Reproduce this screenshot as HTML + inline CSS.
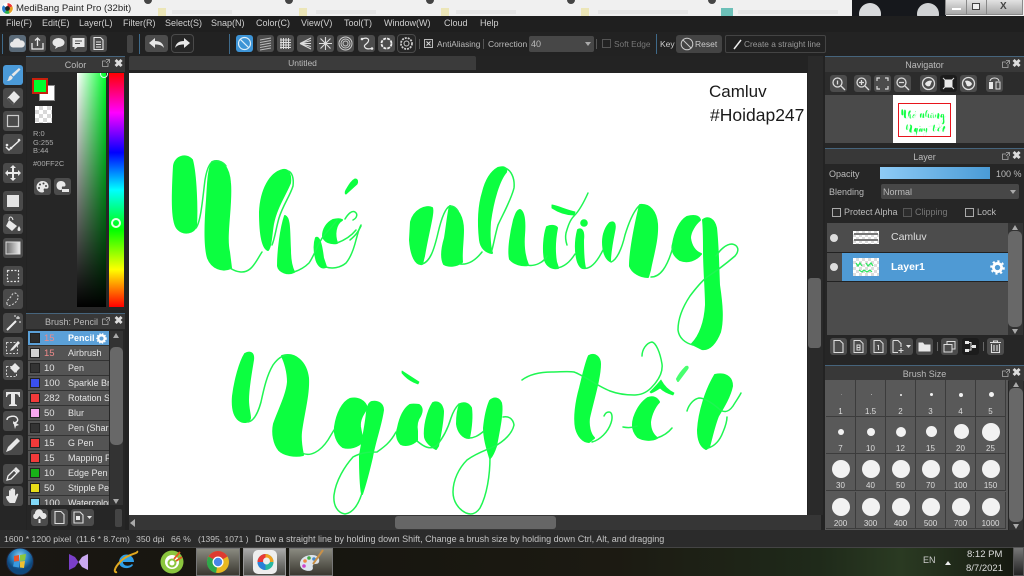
<!DOCTYPE html>
<html lang="en"><head><meta charset="utf-8"><title>MediBang Paint Pro</title>
<style>
html,body{margin:0;padding:0;background:#222}
#r{position:relative;width:1024px;height:576px;overflow:hidden;background:#232323;font-family:"Liberation Sans",sans-serif;color:#ccc;font-size:9px;filter:blur(.3px)}
#r div,#r span,#r svg{position:absolute;display:block;box-sizing:border-box}
#r span{white-space:nowrap}
svg.b,div.b{width:17px;height:17px;background:#4c4c4c;border-radius:3px;fill:#e8e8e8;stroke:none}
svg.t{left:3px;width:20px;height:20px;background:#4a4a4a;border-radius:3px;fill:#e8e8e8}
.hd{background:#383838;border-top:1px solid #46647c;height:16px;color:#bbb;text-align:center;line-height:16px;font-size:9px}
.m{top:18px;color:#d0d0d0;font-size:9px}
.row{left:28px;width:81px;height:15px;background:#545454;border-bottom:1px solid #333}
.row i{position:absolute;left:2px;top:2px;width:10px;height:10px;border:1px solid #222;box-sizing:border-box}
.row b{position:absolute;left:16px;top:2px;font:400 9.5px "Liberation Sans",sans-serif;color:#e0e0e0}
.row u{position:absolute;left:40px;top:2px;text-decoration:none;font-size:9px;color:#e4e4e4;width:41px;overflow:hidden;white-space:nowrap}
.c{width:30px;height:37px;background:#595959;border-right:1px solid #3c3c3c;border-bottom:1px solid #3c3c3c}
.c i{position:absolute;background:#f2f2f2;border-radius:50%}
.c u{position:absolute;left:0;width:100%;top:27px;text-align:center;text-decoration:none;font-size:8px;color:#ddd}
.ck{width:9px;height:9px;border:1px solid #aaa;background:#2c2c2c}
.dot{top:-4px;width:8px;height:8px;border-radius:50%;background:#444}
</style></head><body><div id="r">

<!-- title bar -->
<div style="left:0;top:0;width:1024px;height:16px;background:#f0f0f0"></div>
<div class="dot" style="left:144px"></div><div class="dot" style="left:285px"></div><div class="dot" style="left:426px"></div><div class="dot" style="left:567px"></div><div class="dot" style="left:708px"></div>
<div style="left:158px;top:8px;width:8px;height:8px;background:#ece6b8"></div>
<div style="left:172px;top:10px;width:60px;height:4px;background:#e6e6e6"></div>
<div style="left:299px;top:8px;width:8px;height:8px;background:#ece6b8"></div>
<div style="left:316px;top:10px;width:60px;height:4px;background:#e6e6e6"></div>
<div style="left:441px;top:8px;width:8px;height:8px;background:#ece6b8"></div>
<div style="left:456px;top:10px;width:60px;height:4px;background:#e6e6e6"></div>
<div style="left:581px;top:8px;width:8px;height:8px;background:#ece6b8"></div>
<div style="left:598px;top:10px;width:90px;height:4px;background:#e6e6e6"></div>
<div style="left:721px;top:8px;width:12px;height:8px;background:#6cc0b8"></div>
<div style="left:738px;top:10px;width:100px;height:4px;background:#e6e6e6"></div>
<div style="left:852px;top:0;width:94px;height:16px;background:#16181c"></div>
<div style="left:859px;top:3px;width:22px;height:22px;border-radius:50%;background:#d8dadc;clip-path:inset(0 0 9px 0)"></div>
<div style="left:917px;top:3px;width:22px;height:22px;border-radius:50%;background:#d0d2d4;clip-path:inset(0 0 9px 0)"></div>
<div style="left:945px;top:0;width:78px;height:15px;background:linear-gradient(#e2e2e2,#a8a8a8);border:1px solid #8a8a8a;border-top:0"></div>
<div style="left:966px;top:0;width:1px;height:15px;background:#888"></div>
<div style="left:986px;top:0;width:1px;height:15px;background:#888"></div>
<div style="left:952px;top:8px;width:9px;height:2px;background:#fff"></div>
<div style="left:972px;top:3px;width:8px;height:7px;border:1px solid #444;background:#eee"></div>
<span style="left:1000px;top:1px;font-size:10px;color:#444;font-weight:700">X</span>
<svg style="left:1px;top:2px;width:13px;height:13px" viewBox="0 0 12 12"><circle cx="6" cy="6" r="5.500" fill="#fff"/><path d="M6 6V1a5 5 0 0 1 4.500 3z" fill="#e33"/><path d="M6 6l4.500-2A5 5 0 0 1 8 10.500z" fill="#e8a020"/><path d="M6 6l2 4.500A5 5 0 0 1 3 10z" fill="#2ab04a"/><path d="M6 6L3 10A5 5 0 0 1 2 3z" fill="#2a80d0"/><circle cx="6" cy="6" r="2.200" fill="#222"/></svg>
<span style="left:16px;top:3px;font-size:9.600px;color:#222">MediBang Paint Pro (32bit)</span>

<!-- menu -->
<div style="left:0;top:16px;width:1024px;height:16px;background:#1f1f1f"></div>
<span class="m" style="left:6px">File(F)</span><span class="m" style="left:42px">Edit(E)</span><span class="m" style="left:79px">Layer(L)</span><span class="m" style="left:123px">Filter(R)</span><span class="m" style="left:165px">Select(S)</span><span class="m" style="left:211px">Snap(N)</span><span class="m" style="left:256px">Color(C)</span><span class="m" style="left:301px">View(V)</span><span class="m" style="left:344px">Tool(T)</span><span class="m" style="left:384px">Window(W)</span><span class="m" style="left:444px">Cloud</span><span class="m" style="left:480px">Help</span>

<!-- toolbar -->
<div style="left:0;top:32px;width:826px;height:24px;background:#222"></div>
<div style="left:2px;top:34px;width:1px;height:20px;background:#3f6a8a"></div>
<svg class="b" style="left:9px;top:35px;background:#5a6a78" viewBox="0 0 17 17"><path d="M4 12.500a3 3 0 0 1 0-6 4 4 0 0 1 7.500-1A3.500 3.500 0 0 1 13 12.500z"/></svg>
<svg class="b" style="left:29px;top:35px" viewBox="0 0 17 17"><path d="M3 8v6h11V8M8.500 11V3M6 5.500l2.500-2.500 2.500 2.500" fill="none" stroke="#e8e8e8" stroke-width="1.300"/></svg>
<svg class="b" style="left:50px;top:35px" viewBox="0 0 17 17"><ellipse cx="8.500" cy="7.500" rx="6" ry="4.500"/><path d="M6 11l-1 3 4-2.500z"/></svg>
<svg class="b" style="left:70px;top:35px" viewBox="0 0 17 17"><path d="M2.500 3h12v9h-7l-3 2.500V12h-2z"/><path d="M5 6h7M5 8.500h5" stroke="#4c4c4c" fill="none"/></svg>
<svg class="b" style="left:90px;top:35px" viewBox="0 0 17 17"><path d="M4 2.500h6.500L13 5v9.500H4zM6 7h5M6 9.500h5M6 12h5" fill="none" stroke="#e8e8e8" stroke-width="1.100"/></svg>
<div style="left:127px;top:35px;width:6px;height:18px;background:#444;border-radius:2px"></div>
<div style="left:139px;top:34px;width:1px;height:20px;background:#3f6a8a"></div>
<svg class="b" style="left:145px;top:35px;width:23px" viewBox="0 0 23 17"><path d="M4 8l6-5v3c5 0 8 2 9 7-2-3-5-3.500-9-3.500V13z"/></svg>
<svg class="b" style="left:172px;top:35px;width:21px;background:#262626;outline:1px solid #4a4a4a" viewBox="0 0 21 17"><path d="M18 8l-6-5v3c-5 0-8 2-9 7 2-3 5-3.500 9-3.500V13z"/></svg>
<div style="left:229px;top:34px;width:1px;height:20px;background:#3f6a8a"></div>
<svg class="b" style="left:236px;top:35px;background:#3d94d6" viewBox="0 0 17 17"><circle cx="8.500" cy="8.500" r="6" fill="none" stroke="#dceefa" stroke-width="1.200"/><path d="M4.300 4.300l8.400 8.400" stroke="#dceefa" stroke-width="1.200"/></svg>
<svg class="b" style="left:257px;top:35px" viewBox="0 0 17 17"><path d="M3 5l11-2M3 7.500l11-2M3 10l11-2M3 12.500l11-2M3 15l11-2" stroke="#bbb" fill="none"/></svg>
<svg class="b" style="left:277px;top:35px" viewBox="0 0 17 17"><path d="M4 3v11M6.500 3v11M9 3v11M11.500 3v11M3 5h11M3 7.500h11M3 10h11M3 12.500h11" stroke="#ddd" fill="none"/></svg>
<svg class="b" style="left:297px;top:35px" viewBox="0 0 17 17"><path d="M3 8.500L14 3M3 8.500h11M3 8.500L14 14M3 8.500L14 5.500M3 8.500L14 11.500" stroke="#ddd" fill="none"/></svg>
<svg class="b" style="left:317px;top:35px" viewBox="0 0 17 17"><path d="M8.500 2v13M2 8.500h13M3.500 3.500l10 10M13.500 3.500l-10 10" stroke="#ddd" fill="none" stroke-width="1.100"/></svg>
<svg class="b" style="left:337px;top:35px" viewBox="0 0 17 17" fill="none"><g fill="none" stroke="#ccc"><circle cx="8.500" cy="8.500" r="6.500"/><circle cx="8.500" cy="8.500" r="4.500"/><circle cx="8.500" cy="8.500" r="2.500"/></g></svg>
<svg class="b" style="left:358px;top:35px" viewBox="0 0 17 17"><path d="M4 4c5-2 8 0 6 3S5 10 7 12.500s5 1 7 1" fill="none" stroke="#e8e8e8" stroke-width="1.200"/><circle cx="4" cy="4" r="1.300"/><circle cx="14" cy="13.500" r="1.300"/></svg>
<svg class="b" style="left:378px;top:35px" viewBox="0 0 17 17"><circle cx="8.500" cy="8.500" r="5" fill="none" stroke="#eee" stroke-width="1.800" stroke-dasharray="3 1"/></svg>
<svg class="b" style="left:398px;top:35px;background:#262626;outline:1px solid #4a4a4a" viewBox="0 0 17 17"><circle cx="8.500" cy="8.500" r="5.500" fill="none" stroke="#ccc" stroke-width="1.800" stroke-dasharray="2 1"/><circle cx="8.500" cy="8.500" r="2.500" fill="none" stroke="#ccc"/></svg>
<div style="left:419px;top:39px;width:1px;height:10px;background:#555"></div>
<svg style="left:424px;top:39px;width:9px;height:9px" viewBox="0 0 9 9"><rect x=".5" y=".5" width="8" height="8" fill="#2a2a2a" stroke="#bbb"/><path d="M2.500 2.500l4 4M6.500 2.500l-4 4" stroke="#ddd"/></svg>
<span style="left:437px;top:39px;font-size:8.300px;color:#bbb">AntiAliasing</span>
<div style="left:483px;top:39px;width:1px;height:10px;background:#555"></div>
<span style="left:488px;top:39px;font-size:8.500px;color:#bbb">Correction</span>
<div style="left:529px;top:36px;width:65px;height:16px;background:#474747;border-radius:2px"></div>
<span style="left:531px;top:39px;font-size:9px;color:#bbb">40</span>
<div style="left:585px;top:42px;border:3px solid transparent;border-top:4px solid #aaa"></div>
<div style="left:596px;top:39px;width:1px;height:10px;background:#555"></div>
<div class="ck" style="left:602px;top:39px;border-color:#555;background:#222"></div>
<span style="left:614px;top:39px;font-size:8.300px;color:#777">Soft Edge</span>
<div style="left:656px;top:34px;width:1px;height:20px;background:#3f6a8a"></div>
<span style="left:660px;top:39px;font-size:8.500px;color:#ccc">Key</span>
<div style="left:676px;top:35px;width:46px;height:18px;background:#444;border-radius:3px"></div>
<svg style="left:680px;top:37px;width:14px;height:14px" viewBox="0 0 14 14"><circle cx="7" cy="7" r="5.800" fill="none" stroke="#ccc"/><path d="M3 3l8 8" stroke="#ccc"/></svg>
<span style="left:695px;top:39px;font-size:8.500px;color:#ccc">Reset</span>
<div style="left:725px;top:35px;width:101px;height:18px;border:1px solid #444;border-radius:2px"></div>
<svg style="left:732px;top:38px;width:12px;height:12px" viewBox="0 0 12 12"><path d="M2 11L9 2" stroke="#eee" stroke-width="1.500"/></svg>
<span style="left:744px;top:39px;font-size:8.300px;color:#999">Create a straight line</span>

<!-- left tools -->
<div style="left:0;top:56px;width:26px;height:474px;background:#262626"></div>
<svg class="t" style="top:65px;background:#4b9ad8" viewBox="0 0 20 20"><path d="M16 3l1.500 1.500-7 7-2-2zM8 10.500l1.800 1.800c-.5 2.500-3 3.700-6 3.700 1.500-1 1.500-2 1.800-3 .4-1.500 1.200-2.500 2.400-2.500z"/></svg>
<svg class="t" style="top:88px" viewBox="0 0 20 20"><path d="M11 3l6 6-7 7.500-6-6z"/><path d="M6 10l5 5-1 1.500-6-6z" fill="#4a4a4a"/></svg>
<svg class="t" style="top:111px" viewBox="0 0 20 20"><rect x="4.500" y="4.500" width="11" height="11" fill="none" stroke="#ccc" stroke-width="1.200"/></svg>
<svg class="t" style="top:134px" viewBox="0 0 20 20"><path d="M3 13l3 3 11-10" fill="none" stroke="#eee" stroke-width="1.500"/><circle cx="4" cy="11" r="1.300"/><circle cx="8" cy="14" r="1.300"/><circle cx="16" cy="6" r="1.300"/></svg>
<svg class="t" style="top:163px" viewBox="0 0 20 20"><path d="M10 2l3 3h-2v4h4V7l3 3-3 3v-2h-4v4h2l-3 3-3-3h2v-4H5v2l-3-3 3-3v2h4V5H7z"/></svg>
<svg class="t" style="top:191px" viewBox="0 0 20 20"><rect x="4" y="4" width="12" height="12" fill="#e4e4e4"/></svg>
<svg class="t" style="top:214px" viewBox="0 0 20 20"><path d="M6 6l8 6-5 5-6-5z"/><path d="M6 6c0-4 3-4 4 0" fill="none" stroke="#eee"/><path d="M16 12c2 3 2 5 0 5s-2-2 0-5z"/></svg>
<svg class="t" style="top:238px" viewBox="0 0 20 20"><defs><linearGradient id="g1"><stop offset="0" stop-color="#666"/><stop offset="1" stop-color="#eee"/></linearGradient></defs><rect x="3" y="4" width="14" height="12" fill="url(#g1)" stroke="#ddd"/></svg>
<svg class="t" style="top:266px" viewBox="0 0 20 20"><rect x="4.500" y="4.500" width="11" height="11" fill="none" stroke="#ddd" stroke-width="1.200" stroke-dasharray="2 1.500"/></svg>
<svg class="t" style="top:289px" viewBox="0 0 20 20"><path d="M4 15c-1-4 3-5 5-9s7-1 6 3-4 6-7 7-3 1-4-1z" fill="none" stroke="#ccc" stroke-width="1.100" stroke-dasharray="2 1.500"/></svg>
<svg class="t" style="top:313px" viewBox="0 0 20 20"><path d="M4 17L13 8" stroke="#eee" stroke-width="2"/><path d="M15 3v3M13 5h4M17 8v2M12 2v2" stroke="#eee"/></svg>
<svg class="t" style="top:337px" viewBox="0 0 20 20"><rect x="3.500" y="5.500" width="11" height="11" fill="none" stroke="#ccc" stroke-dasharray="2 1.500"/><path d="M8 12l7-8 2 2-7 7-3 1z"/></svg>
<svg class="t" style="top:360px" viewBox="0 0 20 20"><rect x="3.500" y="6.500" width="10" height="10" fill="none" stroke="#ccc" stroke-dasharray="2 1.500"/><path d="M12 3l5 5-5 5-5-5z"/></svg>
<svg class="t" style="top:389px" viewBox="0 0 20 20"><path d="M3 3h14v5h-1c-.5-2-1-3-4-3v10l2 1v1H6v-1l2-1V5C5 5 4.500 6 4 8H3z"/></svg>
<svg class="t" style="top:411px" viewBox="0 0 20 20"><path d="M4 9c0-4 8-5 10-2s-1 5-4 5" fill="none" stroke="#eee" stroke-width="1.400"/><path d="M10 10l6 4-3 1-1 3z"/></svg>
<svg class="t" style="top:435px" viewBox="0 0 20 20"><path d="M3 17l2-5L14 3l3 3-9 9z"/></svg>
<svg class="t" style="top:464px" viewBox="0 0 20 20"><path d="M4 16l1-4 6-6 3 3-6 6z" fill="none" stroke="#eee" stroke-width="1.300"/><path d="M11 5l2-2 4 4-2 2z"/></svg>
<svg class="t" style="top:486px" viewBox="0 0 20 20"><path d="M6 10V5c0-1 1.500-1 1.500 0V3.500c0-1 1.500-1 1.500 0V3c0-1 1.600-1 1.600 0v1c0-1 1.500-1 1.500 0v6l1.500-2c1-1 2 0 1.500 1L12 17H7c-2-1-4-5-4-6s2-1 3-1z"/></svg>

<!-- color panel -->
<div style="left:27px;top:56px;width:98px;height:254px;background:#262626"></div>
<div class="hd" style="left:26px;top:56px;width:99px">Color</div>
<svg style="left:102px;top:59px;width:8px;height:8px" viewBox="0 0 8 8"><path d="M6 4v3.500H.5V2H4M4 .5h3.500V4M7.500.5L4 4" fill="none" stroke="#aaa" stroke-width=".8"/></svg>
<span style="left:114px;top:57px;font-size:11px;font-weight:700;color:#ddd">✖</span>
<div style="left:39px;top:85px;width:16px;height:16px;background:#fff;border:1px solid #888"></div>
<div style="left:32px;top:78px;width:16px;height:16px;background:#00ff2c;border:2px solid #c8200c"></div>
<div style="left:35px;top:106px;width:17px;height:17px;background:repeating-conic-gradient(#d8d8d8 0 25%,#fff 0 50%) 0 0/8px 8px"></div>
<span style="left:33px;top:129px;font-size:7.500px;color:#aaa">R:0</span>
<span style="left:33px;top:138px;font-size:7.500px;color:#aaa">G:255</span>
<span style="left:33px;top:146px;font-size:7.500px;color:#aaa">B:44</span>
<span style="left:33px;top:159px;font-size:7.500px;color:#aaa">#00FF2C</span>
<svg class="b" style="left:34px;top:178px" viewBox="0 0 17 17"><path d="M8.500 3c4 0 6 2.500 6 5.500s-3 2-4 2-1 1.500-.5 2.500-1 1.500-2 1.500c-3 0-5.500-2.500-5.500-5.500S5 3 8.500 3z"/><g fill="#444"><circle cx="6" cy="6.500" r="1"/><circle cx="9.500" cy="5.500" r="1"/><circle cx="12" cy="8" r="1"/><circle cx="5" cy="10" r="1"/></g></svg>
<svg class="b" style="left:54px;top:178px" viewBox="0 0 17 17"><path d="M7 3c3 0 4.500 2 4.500 4s-2 1.500-3 1.500S8 10 8 11s-1 1-1.500 1C4 12 2.500 10 2.500 7.500S4 3 7 3z"/><rect x="8" y="11" width="7" height="3"/></svg>
<div style="left:77px;top:73px;width:29px;height:234px;background:linear-gradient(to top,#000,transparent),linear-gradient(to right,#fff,#00ff2c)"></div>
<div style="left:100px;top:70px;width:8px;height:8px;border:1.500px solid #dfe;border-radius:50%;clip-path:inset(3px 0 0 0)"></div>
<div style="left:109px;top:73px;width:15px;height:234px;background:linear-gradient(#f00 0%,#f0f 17%,#00f 34%,#0ff 50%,#0f0 67%,#ff0 84%,#f00 100%)"></div>
<div style="left:111px;top:218px;width:10px;height:10px;border:2px solid #e8ffe8;border-radius:50%"></div>

<!-- brush panel -->
<div style="left:27px;top:313px;width:98px;height:217px;background:#262626"></div>
<div class="hd" style="left:26px;top:313px;width:99px;padding-right:8px">Brush: Pencil</div>
<svg style="left:102px;top:317px;width:8px;height:8px" viewBox="0 0 8 8"><path d="M6 4v3.500H.5V2H4M4 .5h3.500V4M7.500.5L4 4" fill="none" stroke="#aaa" stroke-width=".8"/></svg>
<span style="left:114px;top:314px;font-size:11px;font-weight:700;color:#ddd">✖</span>
<div style="left:28px;top:331px;width:81px;height:174px;overflow:hidden;background:#545454">
<div class="row" style="left:0;top:0;background:#5ba0d8"><i style="background:#2c2c2c"></i><b style="color:#ee8a8a">15</b><u style="font-weight:700;color:#fff">Pencil</u></div>
<div class="row" style="left:0;top:15px"><i style="background:#d4d4d4"></i><b style="color:#ee8a8a">15</b><u>Airbrush</u></div>
<div class="row" style="left:0;top:30px"><i style="background:#333"></i><b>10</b><u>Pen</u></div>
<div class="row" style="left:0;top:45px"><i style="background:#3a50ee"></i><b>100</b><u>Sparkle Brush</u></div>
<div class="row" style="left:0;top:60px"><i style="background:#f23a3a"></i><b>282</b><u>Rotation Sym</u></div>
<div class="row" style="left:0;top:75px"><i style="background:#f8a8f0"></i><b>50</b><u>Blur</u></div>
<div class="row" style="left:0;top:90px"><i style="background:#333"></i><b>10</b><u>Pen (Sharp)</u></div>
<div class="row" style="left:0;top:105px"><i style="background:#f23a3a"></i><b>15</b><u>G Pen</u></div>
<div class="row" style="left:0;top:120px"><i style="background:#f23a3a"></i><b>15</b><u>Mapping Pen</u></div>
<div class="row" style="left:0;top:135px"><i style="background:#18b018"></i><b>10</b><u>Edge Pen</u></div>
<div class="row" style="left:0;top:150px"><i style="background:#e8dc18"></i><b>50</b><u>Stipple Pen</u></div>
<div class="row" style="left:0;top:165px"><i style="background:#80d8f8"></i><b>100</b><u>Watercolor</u></div>
</div>
<svg style="left:96px;top:333px;width:11px;height:11px" viewBox="0 0 12 12"><circle cx="6" cy="6" r="3.500" fill="none" stroke="#fff" stroke-width="2.500"/><circle cx="6" cy="6" r="5" fill="none" stroke="#fff" stroke-width="1.500" stroke-dasharray="1.500 1.500"/></svg>
<div style="left:110px;top:331px;width:13px;height:174px;background:#333"></div>
<div style="left:110px;top:347px;width:13px;height:98px;background:#686868;border-radius:5px"></div>
<div style="left:113px;top:333px;border:3.500px solid transparent;border-bottom:5px solid #aaa;border-top:0"></div>
<div style="left:113px;top:499px;border:3.500px solid transparent;border-top:5px solid #aaa;border-bottom:0"></div>
<svg class="b" style="left:31px;top:509px" viewBox="0 0 17 17"><path d="M4 10a3 3 0 0 1 0-5.500 4 4 0 0 1 8-.5 3 3 0 0 1 1 6h-2l-2.500-3L6 10zM7.500 10h2v4h-2z"/></svg>
<svg class="b" style="left:51px;top:509px" viewBox="0 0 17 17"><path d="M4 2.500h6L13 5.500v9H4z" fill="none" stroke="#ddd" stroke-width="1.100"/></svg>
<svg class="b" style="left:71px;top:509px;width:23px" viewBox="0 0 23 17"><path d="M3 3h6l3 3v8H3z" fill="none" stroke="#ddd" stroke-width="1.100"/><rect x="5" y="7" width="4" height="4"/><path d="M16 7h5l-2.500 3z"/></svg>
<div style="left:115px;top:509px;width:7px;height:18px;background:#444;border-radius:2px"></div>

<!-- center -->
<div style="left:129px;top:56px;width:347px;height:14px;background:#3b3b3b;border-radius:2px 2px 0 0;text-align:center;color:#bbb;line-height:14px;font-size:8.500px">Untitled</div>
<div style="left:129px;top:73px;width:678px;height:442px;background:#fff;overflow:hidden"></div>
<span style="left:709px;top:82px;font-size:17px;color:#1a1a1a">Camluv</span>
<span style="left:710px;top:105px;font-size:17.500px;color:#1a1a1a">#Hoidap247</span>

<svg style="left:129px;top:73px;width:678px;height:442px" viewBox="129 73 678 442">
<g id="art">
<g fill="#0cff40" stroke="#0cff40" stroke-width="2" stroke-linejoin="round">
<!-- Nh -->
<path d="M174 166C175 157 186 153 192 160C196 175 197 210 196 226C194 233 184 235 178 229C172 224 172 200 174 166Z"/>
<path d="M212 162C222 158 229 168 230 183C232 205 225 235 229 252L231 268C222 272 212 268 208 258C205 248 205 225 207 200C208 185 208 172 212 162Z"/>
<path d="M283 170C289 169 291 176 290 183C285 195 276 208 273 224C271 236 271 246 268 250C262 248 260 232 260 212C261 190 270 173 283 170Z"/>
<path d="M285 216C290 218 289 232 290 250C290 260 291 266 294 272C288 275 279 272 278 266C278 250 281 228 285 216Z"/>
<!-- ở -->
<path d="M316 238C320 236 322 250 323 258L326 267C321 269 317 264 316 258C314 250 314 244 316 238Z"/>
<path d="M333 220C337 219 340 219 342 220C335 224 334 235 337 243C331 244 324 242 323 236C323 229 327 223 333 220Z"/>
<path d="M355 179C358 179 358 182 357 184L346 194C345 194 345 192 346 190C349 185 351 181 355 179Z" stroke-width="1"/>
<!-- n -->
<path d="M411 222C414 210 426 205 432 208C434 212 428 232 424 256L422 264C416 265 411 256 410 240Z"/>
<path d="M450 206C458 208 463 218 463 230C463 242 461 252 462 262C457 266 449 267 444 264C441 258 442 248 445 238C447 226 448 214 450 206Z"/>
<!-- h ữ -->
<path d="M498 168C504 166 507 168 506 172C499 180 493 200 490 222C489 236 490 248 492 253C486 252 481 248 480 240C478 222 479 205 483 192C486 180 491 172 498 168Z"/>
<path d="M520 210C524 212 525 222 524 235C523 248 525 258 528 265C522 266 514 264 510 259C508 250 511 232 514 220C516 214 517 211 520 210Z"/>
<path d="M547 227C552 225 556 226 557 228C555 238 554 250 556 262L558 268C552 269 547 266 545 260C543 250 544 236 547 227Z"/>
<path d="M552 205C558 206 566 210 575 212L574 215C566 215 558 212 552 208Z" stroke-width="1"/>
<path d="M578 230C582 228 584 232 583 240C583 250 583 260 585 268C581 269 578 264 577 258C575 248 576 238 578 230Z"/>
<circle cx="584" cy="223" r="3.800" stroke-width="0"/>
<path d="M610 223C614 221 616 224 614 232C612 242 610 252 610 261C605 258 603 250 603 242C603 234 606 227 610 223Z"/>
<!-- n g -->
<path d="M640 205C650 204 656 212 657 224C658 240 652 258 650 270L648 277C640 277 632 272 630 266C630 252 634 232 637 218Z"/>
<path d="M687 217C694 215 699 216 700 220C695 224 690 232 690 238C691 246 695 252 701 254C696 260 688 263 680 260C674 256 671 250 673 244C675 232 680 221 687 217Z"/>
<path d="M703 220C708 216 714 219 716 228C718 246 718 262 719 285C722 305 723 320 720 332C716 342 710 350 702 349L692 344C700 336 705 322 706 305C706 290 704 270 704 250C704 238 704 228 703 220Z"/>
<!-- Ng -->
<path d="M245 354C250 351 254 353 253 360C251 372 248 388 248 400C248 408 250 414 250 418C249 423 243 423 239 420C234 416 232 408 233 396C235 380 240 362 245 354Z"/>
<path d="M282 356C295 352 306 362 308 378C309 395 303 415 301 432C300 442 302 450 303 455C295 457 284 455 279 450C274 444 272 433 274 424C278 412 287 395 288 382C288 372 285 362 282 356Z"/>
<path d="M350 399C358 397 365 401 367 408C363 414 359 420 360 427C361 433 362 437 363 441C358 447 349 449 343 447C337 443 334 434 335 427C337 413 343 402 350 399Z"/>
<path d="M372 402C378 401 383 404 383 410C381 425 375 440 372 457C369 470 366 482 362 494C360 482 360 468 360 456C362 442 366 425 367 412C368 406 369 403 372 402Z"/>
<!-- ày -->
<path d="M410 405C414 404 416 405 419 405C423 408 422 412 420 416C417 420 416 425 417 431L417 440C412 445 405 446 401 444C397 440 396 434 398 428C400 418 404 409 410 405Z"/>
<path d="M433 403C438 401 442 404 443 411C443 422 440 435 438 446L436 449C432 447 426 442 425 437C424 428 427 412 433 403Z"/>
<path d="M460 404C465 402 469 404 471 408C472 416 471 428 469 438C463 438 458 432 457 424C457 416 458 409 460 404Z"/>
<path d="M490 401C494 397 499 398 501 403C503 412 499 430 496 446C494 452 492 456 490 458C487 448 484 438 484 428C485 418 487 408 490 401Z"/>
<path d="M402 371L419 382L418 384C412 382 406 378 402 373Z" stroke-width=".8"/>
<!-- Tết -->
<path d="M589 356C595 353 600 357 600 364C600 378 593 400 589 418C588 426 590 434 594 438L589 442C583 442 578 436 576 428C574 418 576 402 580 388C583 376 586 362 589 356Z"/>
<path d="M648 398C653 396 657 398 659 402C655 406 651 414 650 422C650 430 653 435 657 438C651 441 643 440 638 437C633 432 632 425 634 418C637 409 642 402 648 398Z"/>
<path d="M650 392C654 388 658 384 661 380C664 386 668 390 674 393L673 395C666 393 662 390 660 388C657 390 654 392 651 393Z" stroke-width=".8"/>
<path d="M686 367C688 366 688 368 687 369L678 381L677 379C679 375 682 371 686 367Z" opacity=".75"/>
<path d="M715 375C724 373 732 376 732 386C730 396 724 406 718 416C714 426 712 436 709 447L706 449C700 446 698 438 698 430C699 412 706 390 715 375Z"/>
</g>
<g fill="none" stroke="#1ff652" stroke-width="1.500" stroke-linecap="round">
<path d="M196 228C201 222 203 195 205 180C207 168 210 161 215 161C220 161 223 162 226 166"/>
<path d="M230 268C236 272 244 274 250 269C255 265 258 258 262 252"/>
<path d="M288 171C292 172 294 178 293 186C290 196 283 205 279 218C276 228 275 238 272 245"/>
<path d="M294 272C300 270 305 267 309 263C314 256 317 246 321 240C324 234 330 230 337 220"/>
<path d="M326 267C332 269 340 268 346 263C351 257 354 248 356 240C358 233 359 228 361 225"/>
<path d="M337 243C345 240 352 235 356 230M361 226C358 232 356 235 350 240"/>
<path d="M345 219C348 214 352 210 355 212C358 214 357 218 353 220"/>
<path d="M422 264C430 262 434 250 438 233C441 220 445 208 450 206C454 206 456 208 458 211"/>
<path d="M460 264C468 265 475 261 482 252"/>
<path d="M505 168C511 170 515 178 514 188C511 200 504 212 498 225C495 235 493 248 491 253"/>
<path d="M527 265C535 267 544 262 547 256M557 268C564 267 570 262 575 254M583 268C590 270 597 262 603 250"/>
<path d="M588 193C584 202 580 210 574 216C570 220 568 226 566 233C565 238 566 242 567 245"/>
<path d="M611 262C617 260 622 248 625 235C629 222 634 210 640 205"/>
<path d="M651 277C660 277 667 268 673 247"/>
<path d="M693 345C685 343 679 338 678 330C678 320 682 308 690 296C696 288 701 282 707 277C718 270 728 262 735 256C740 250 738 245 732 244C726 244 720 250 716 256"/>
<path d="M248 422C254 421 258 413 261 402C264 388 267 375 273 365C278 358 283 355 288 355"/>
<path d="M302 453C310 457 320 452 328 440L334 430"/>
<path d="M362 493C358 506 352 513 345 514C338 513 333 506 334 495C336 480 345 466 353 457C362 452 370 452 377 452C384 447 390 443 396 432"/>
<path d="M417 441C423 446 430 451 437 445C443 438 448 428 451 418C453 412 455 408 459 404"/>
<path d="M469 438C474 438 478 436 484 431"/>
<path d="M490 457C490 475 487 495 480 508C476 514 471 515 466 513C458 509 453 501 453 492C453 480 459 468 467 460C478 452 490 449 497 445C505 440 512 434 514 425C513 418 508 416 503 417"/>
<path d="M522 380C530 374 540 372 552 372C560 372 568 371 574 372C585 376 597 386 610 391C618 394 626 395 634 395C642 395 647 392 651 388C659 380 663 372 662 364C660 352 656 343 652 342C646 343 642 350 642 356"/>
<path d="M592 442C600 440 608 432 611 423C613 417 612 412 609 412C606 412 605 414 604 416"/>
<path d="M623 427C628 428 632 428 637 426M657 438C663 436 668 433 672 428"/>
<path d="M687 411C689 404 694 399 699 398C705 398 712 403 718 408C723 413 728 413 733 406C736 401 739 397 741 393"/>
<path d="M708 448C715 446 720 440 723 432C726 425 727 420 727 417"/>
</g>
</g>
</svg>

<!-- scrollbars -->
<div style="left:808px;top:56px;width:15px;height:459px;background:#2a2a2a"></div>
<div style="left:808px;top:278px;width:13px;height:70px;background:#626262;border-radius:3px"></div>
<div style="left:129px;top:515px;width:692px;height:15px;background:#363636"></div>
<div style="left:395px;top:516px;width:161px;height:13px;background:#666;border-radius:3px"></div>
<div style="left:130px;top:519px;border:4px solid transparent;border-right:5px solid #aaa;border-left:0"></div>

<!-- navigator -->
<div style="left:825px;top:56px;width:199px;height:475px;background:#262626"></div>
<div class="hd" style="left:825px;top:56px;width:199px;padding-right:0">Navigator</div>
<svg style="left:1002px;top:60px;width:8px;height:8px" viewBox="0 0 8 8"><path d="M6 4v3.500H.5V2H4M4 .5h3.500V4M7.500.5L4 4" fill="none" stroke="#aaa" stroke-width=".8"/></svg>
<span style="left:1012px;top:57px;font-size:11px;font-weight:700;color:#ddd">✖</span>
<div style="left:825px;top:72px;width:199px;height:23px;background:#2c2c2c"></div>
<svg class="b" style="left:830px;top:75px" viewBox="0 0 17 17"><g fill="none" stroke="#ddd" stroke-width="1.300"><circle cx="7.500" cy="7.500" r="4.500"/><path d="M11 11l4 4M7.500 5.500v4"/></g></svg>
<svg class="b" style="left:854px;top:75px" viewBox="0 0 17 17"><g fill="none" stroke="#ddd" stroke-width="1.300"><circle cx="7.500" cy="7.500" r="4.500"/><path d="M11 11l4 4M5 7.500h5M7.500 5v5"/></g></svg>
<svg class="b" style="left:874px;top:75px" viewBox="0 0 17 17"><g fill="none" stroke="#ddd" stroke-width="1.200"><path d="M3 6V3h3M11 3h3v3M14 11v3h-3M6 14H3v-3"/></g></svg>
<svg class="b" style="left:894px;top:75px" viewBox="0 0 17 17"><g fill="none" stroke="#ddd" stroke-width="1.300"><circle cx="7.500" cy="7.500" r="4.500"/><path d="M11 11l4 4M5 7.500h5"/></g></svg>
<svg class="b" style="left:920px;top:75px" viewBox="0 0 17 17"><circle cx="8.500" cy="8.500" r="6" fill="none" stroke="#ddd" stroke-width="1.300"/><path d="M5 9c1-3 5-4 7-3l-2 5c-2 1-4 0-5-2z"/></svg>
<svg class="b" style="left:940px;top:75px;background:#1c1c1c" viewBox="0 0 17 17"><rect x="4.500" y="4.500" width="8" height="8"/><path d="M3 3l2 2M14 3l-2 2M3 14l2-2M14 14l-2-2" stroke="#ddd"/></svg>
<svg class="b" style="left:960px;top:75px" viewBox="0 0 17 17"><circle cx="8.500" cy="8.500" r="6" fill="none" stroke="#ddd" stroke-width="1.300"/><path d="M5 6c2-1 6 0 7 3-1 2-3 3-5 2z"/></svg>
<svg class="b" style="left:986px;top:75px" viewBox="0 0 17 17"><rect x="3" y="7" width="4" height="7"/><rect x="10" y="7" width="4" height="7" fill="none" stroke="#ddd"/><path d="M4 6c1-4 8-4 9 0" fill="none" stroke="#ddd"/></svg>
<div style="left:825px;top:95px;width:199px;height:48px;background:#4a4a4a"></div>
<div style="left:893px;top:95px;width:63px;height:48px;background:#fff"></div>
<svg style="left:898px;top:103px;width:53px;height:34px" viewBox="129 73 678 442" preserveAspectRatio="none"><use href="#art"/></svg>
<div style="left:898px;top:103px;width:53px;height:34px;border:1.500px solid #e8141c"></div>

<!-- layer -->
<div class="hd" style="left:825px;top:148px;width:199px">Layer</div>
<svg style="left:1002px;top:152px;width:8px;height:8px" viewBox="0 0 8 8"><path d="M6 4v3.500H.5V2H4M4 .5h3.500V4M7.500.5L4 4" fill="none" stroke="#aaa" stroke-width=".8"/></svg>
<span style="left:1012px;top:149px;font-size:11px;font-weight:700;color:#ddd">✖</span>
<span style="left:829px;top:169px;font-size:9px;color:#bbb">Opacity</span>
<div style="left:880px;top:167px;width:110px;height:12px;background:linear-gradient(to right,#8ecbf6,#4a9bd6)"></div>
<span style="left:996px;top:169px;font-size:9px;color:#bbb">100 %</span>
<span style="left:829px;top:187px;font-size:9px;color:#bbb">Blending</span>
<div style="left:881px;top:184px;width:138px;height:15px;background:#474747;border-radius:2px"></div>
<span style="left:883px;top:187px;font-size:9px;color:#bbb">Normal</span>
<div style="left:1010px;top:190px;border:3px solid transparent;border-top:4px solid #aaa"></div>
<div class="ck" style="left:832px;top:208px"></div><span style="left:844px;top:207px;font-size:9px;color:#bbb">Protect Alpha</span>
<div class="ck" style="left:903px;top:208px;border-color:#555"></div><span style="left:915px;top:207px;font-size:9px;color:#777">Clipping</span>
<div class="ck" style="left:965px;top:208px"></div><span style="left:977px;top:207px;font-size:9px;color:#bbb">Lock</span>
<div style="left:827px;top:223px;width:181px;height:112px;background:#4c4c4c"></div>
<div style="left:827px;top:252px;width:181px;height:1px;background:#222"></div>
<div style="left:827px;top:281px;width:181px;height:1px;background:#222"></div>
<div style="left:842px;top:253px;width:166px;height:28px;background:#4f9ad4"></div>
<div style="left:830px;top:234px;width:8px;height:8px;background:#ddd;border-radius:50%"></div>
<div style="left:830px;top:263px;width:8px;height:8px;background:#ddd;border-radius:50%"></div>
<div style="left:853px;top:231px;width:26px;height:13px;background:repeating-conic-gradient(#ddd 0 25%,#fff 0 50%) 0 0/6px 6px"></div>
<div style="left:854px;top:233px;width:24px;height:2px;background:#777"></div>
<div style="left:854px;top:239px;width:24px;height:2px;background:#777"></div>
<div style="left:853px;top:258px;width:26px;height:18px;background:repeating-conic-gradient(#ddd 0 25%,#fff 0 50%) 0 0/6px 6px"></div>
<svg style="left:853px;top:258px;width:26px;height:18px" viewBox="0 0 26 18"><path d="M3 5l2 3 2-3 2 3M13 5l2 3 3-3 2 3M6 12l3 2 2-2 3 2 3-2 2 2" fill="none" stroke="#2ee860" stroke-width="1.200"/></svg>
<span style="left:891px;top:231px;font-size:10.500px;color:#ddd">Camluv</span>
<span style="left:891px;top:261px;font-size:10.500px;color:#fff;font-weight:700">Layer1</span>
<svg style="left:990px;top:260px;width:15px;height:15px" viewBox="0 0 14 14"><circle cx="7" cy="7" r="3.800" fill="none" stroke="#fff" stroke-width="2.600"/><circle cx="7" cy="7" r="5.800" fill="none" stroke="#fff" stroke-width="2" stroke-dasharray="2 2.500"/></svg>
<div style="left:1008px;top:223px;width:15px;height:112px;background:#333"></div>
<div style="left:1008px;top:231px;width:14px;height:96px;background:#686868;border-radius:5px"></div>
<div style="left:1012px;top:225px;border:3.500px solid transparent;border-bottom:5px solid #aaa;border-top:0"></div>
<div style="left:1012px;top:329px;border:3.500px solid transparent;border-top:5px solid #aaa;border-bottom:0"></div>
<svg class="b" style="left:830px;top:338px" viewBox="0 0 17 17"><path d="M4 2.500h6L13 5.500v9H4z" fill="none" stroke="#ddd" stroke-width="1.100"/></svg>
<svg class="b" style="left:850px;top:338px" viewBox="0 0 17 17"><path d="M4 2.500h6L13 5.500v9H4zM7 7h3v5H7zM7 9.500h3" fill="none" stroke="#ddd"/></svg>
<svg class="b" style="left:870px;top:338px" viewBox="0 0 17 17"><path d="M4 2.500h6L13 5.500v9H4zM8.500 7v5M7.500 8l1-1" fill="none" stroke="#ddd"/></svg>
<svg class="b" style="left:890px;top:338px;width:23px" viewBox="0 0 23 17"><path d="M3 2.500h5L11 5.500V9M3 2.500v12h5M11 10v5M8.500 12.500h5" fill="none" stroke="#ddd" stroke-width="1.100"/><path d="M16 7h5l-2.500 3z"/></svg>
<svg class="b" style="left:916px;top:338px" viewBox="0 0 17 17"><path d="M2.500 4.500h4.500l1.500 2h6v7h-12z"/></svg>
<div style="left:937px;top:342px;width:1px;height:9px;background:#666"></div>
<svg class="b" style="left:941px;top:338px" viewBox="0 0 17 17"><path d="M3 6.500h8v7.500H3zM6 6.500V3.500h8v7.500h-3" fill="none" stroke="#ddd"/></svg>
<svg class="b" style="left:962px;top:338px;background:#1c1c1c" viewBox="0 0 17 17"><rect x="3" y="3" width="4" height="3"/><rect x="3" y="11" width="4" height="3"/><rect x="10" y="7" width="4" height="3"/><path d="M7 4.500h2V12H7M9 8.500h1" stroke="#ddd" fill="none"/></svg>
<div style="left:983px;top:342px;width:1px;height:9px;background:#666"></div>
<svg class="b" style="left:987px;top:338px" viewBox="0 0 17 17"><path d="M3 4.500h11M6.500 4.500V3h4v1.500M4.500 6v8.500h8V6M7 7v6M10 7v6" fill="none" stroke="#ddd" stroke-width="1.100"/></svg>

<!-- brush size -->
<div class="hd" style="left:825px;top:365px;width:199px">Brush Size</div>
<svg style="left:1002px;top:369px;width:8px;height:8px" viewBox="0 0 8 8"><path d="M6 4v3.500H.5V2H4M4 .5h3.500V4M7.500.5L4 4" fill="none" stroke="#aaa" stroke-width=".8"/></svg>
<span style="left:1012px;top:366px;font-size:11px;font-weight:700;color:#ddd">✖</span>
<div style="left:825px;top:380px;width:183px;height:150px;background:#595959"></div>
<div class="c" style="left:826px;top:380px"><i style="left:14.500px;top:14px;width:1px;height:1px;opacity:.4"></i><u>1</u></div>
<div class="c" style="left:856px;top:380px"><i style="left:14.500px;top:14px;width:1px;height:1px;opacity:.7"></i><u>1.5</u></div>
<div class="c" style="left:886px;top:380px"><i style="left:14px;top:14px;width:2px;height:2px"></i><u>2</u></div>
<div class="c" style="left:916px;top:380px"><i style="left:13.500px;top:13px;width:3px;height:3px"></i><u>3</u></div>
<div class="c" style="left:946px;top:380px"><i style="left:13px;top:12.500px;width:4px;height:4px"></i><u>4</u></div>
<div class="c" style="left:976px;top:380px"><i style="left:12.500px;top:12px;width:5px;height:5px"></i><u>5</u></div>
<div class="c" style="left:826px;top:417px"><i style="left:12px;top:11.500px;width:6px;height:6px"></i><u>7</u></div>
<div class="c" style="left:856px;top:417px"><i style="left:11px;top:10.500px;width:8px;height:8px"></i><u>10</u></div>
<div class="c" style="left:886px;top:417px"><i style="left:10px;top:9.500px;width:10px;height:10px"></i><u>12</u></div>
<div class="c" style="left:916px;top:417px"><i style="left:9.500px;top:9px;width:11px;height:11px"></i><u>15</u></div>
<div class="c" style="left:946px;top:417px"><i style="left:7.500px;top:7px;width:15px;height:15px"></i><u>20</u></div>
<div class="c" style="left:976px;top:417px"><i style="left:6px;top:5.500px;width:18px;height:18px"></i><u>25</u></div>
<div class="c" style="left:826px;top:454px"><i style="left:6px;top:6px;width:18px;height:18px"></i><u>30</u></div>
<div class="c" style="left:856px;top:454px"><i style="left:6px;top:6px;width:18px;height:18px"></i><u>40</u></div>
<div class="c" style="left:886px;top:454px"><i style="left:6px;top:6px;width:18px;height:18px"></i><u>50</u></div>
<div class="c" style="left:916px;top:454px"><i style="left:6px;top:6px;width:18px;height:18px"></i><u>70</u></div>
<div class="c" style="left:946px;top:454px"><i style="left:6px;top:6px;width:18px;height:18px"></i><u>100</u></div>
<div class="c" style="left:976px;top:454px"><i style="left:6px;top:6px;width:18px;height:18px"></i><u>150</u></div>
<div class="c" style="left:826px;top:492px"><i style="left:6px;top:6px;width:18px;height:18px"></i><u>200</u></div>
<div class="c" style="left:856px;top:492px"><i style="left:6px;top:6px;width:18px;height:18px"></i><u>300</u></div>
<div class="c" style="left:886px;top:492px"><i style="left:6px;top:6px;width:18px;height:18px"></i><u>400</u></div>
<div class="c" style="left:916px;top:492px"><i style="left:6px;top:6px;width:18px;height:18px"></i><u>500</u></div>
<div class="c" style="left:946px;top:492px"><i style="left:6px;top:6px;width:18px;height:18px"></i><u>700</u></div>
<div class="c" style="left:976px;top:492px"><i style="left:6px;top:6px;width:18px;height:18px"></i><u>1000</u></div>
<div style="left:1009px;top:380px;width:14px;height:150px;background:#333"></div>
<div style="left:1009px;top:388px;width:14px;height:134px;background:#686868;border-radius:5px"></div>
<div style="left:1013px;top:382px;border:3.500px solid transparent;border-bottom:5px solid #aaa;border-top:0"></div>
<div style="left:1013px;top:524px;border:3.500px solid transparent;border-top:5px solid #aaa;border-bottom:0"></div>

<!-- status -->
<div style="left:0;top:530px;width:1024px;height:17px;background:#2b2b2b"></div>
<span style="left:4px;top:534px;font-size:8.700px;color:#c4c4c4">1600 * 1200 pixel</span>
<span style="left:76px;top:534px;font-size:8.700px;color:#c4c4c4">(11.6 * 8.7cm)</span>
<span style="left:136px;top:534px;font-size:8.700px;color:#c4c4c4">350 dpi</span>
<span style="left:171px;top:534px;font-size:8.700px;color:#c4c4c4">66 %</span>
<span style="left:198px;top:534px;font-size:8.500px;color:#c4c4c4">(1395, 1071 )</span>
<span style="left:255px;top:534px;font-size:9px;color:#c4c4c4">Draw a straight line by holding down Shift, Change a brush size by holding down Ctrl, Alt, and dragging</span>

<!-- taskbar -->
<div style="left:0;top:547px;width:1024px;height:29px;background:linear-gradient(to right,#1a1712 0,#16150f 30%,#1c1a12 60%,#1f2a1a 80%,#2a3a22 88%,#14160f 100%);border-top:1px solid #444"></div>
<svg style="left:5px;top:547px;width:30px;height:29px" viewBox="0 0 30 29"><defs><radialGradient id="orb" cx=".5" cy=".3"><stop offset="0" stop-color="#8cd0f0"/><stop offset=".6" stop-color="#2a82c0"/><stop offset="1" stop-color="#10487c"/></radialGradient></defs><circle cx="15" cy="14.500" r="13.500" fill="url(#orb)" stroke="#223"/><path d="M9 9l5-1v6l-5 .5z" fill="#e8542c"/><path d="M15 8l6-1-1 6.500-5 .5z" fill="#8cc83c"/><path d="M9 15l5-.5v6l-6-1z" fill="#3a9ae0"/><path d="M15 14.500l5-.5-1 7-4-.5z" fill="#f0c030"/></svg>
<svg style="left:68px;top:552px;width:21px;height:20px" viewBox="0 0 21 20"><path d="M1 2l6 3 3.500 5L7 15l-6 3z" fill="#7a3fc8"/><path d="M20 2l-6 3-3.500 5 3.500 5 6 3z" fill="#c9a8f0"/></svg>
<svg style="left:113px;top:549px;width:26px;height:25px" viewBox="0 0 26 25"><path d="M6 13a7.500 7.500 0 0 1 15 0H10c0 4 6 5 9 2l1 1c-3 5-14 4-14-3z" fill="#2f9fe8"/><path d="M24 2c2 3-8 2-16 10S1 24 4 23" fill="none" stroke="#e0a820" stroke-width="2"/></svg>
<svg style="left:159px;top:549px;width:26px;height:25px" viewBox="0 0 26 25"><circle cx="13" cy="13" r="11.500" fill="#8cc63e"/><circle cx="13" cy="13" r="7" fill="#fff"/><circle cx="13" cy="14" r="3.500" fill="none" stroke="#8cc63e" stroke-width="2"/><path d="M15 10l6-7M17 12l6-4" stroke="#e05a20" stroke-width="1.800"/></svg>
<div style="left:196px;top:548px;width:44px;height:28px;background:linear-gradient(#8a8a80,#3a3830);border:1px solid #777"></div>
<svg style="left:206px;top:550px;width:24px;height:24px" viewBox="0 0 24 24"><circle cx="12" cy="12" r="11" fill="#e8b820"/><path d="M12 12L2.500 6.500A11 11 0 0 1 21.500 6.500z" fill="#dd3a30"/><path d="M12 12L2.500 6.500A11 11 0 0 0 10 23z" fill="#2ea84a"/><circle cx="12" cy="12" r="5.500" fill="#fff"/><circle cx="12" cy="12" r="4.200" fill="#4a86e8"/></svg>
<div style="left:243px;top:548px;width:43px;height:28px;background:linear-gradient(#aaa,#4a4a44);border:1px solid #999"></div>
<div style="left:253px;top:550px;width:24px;height:24px;background:#eee;border-radius:5px"></div>
<svg style="left:257px;top:553px;width:17px;height:18px" viewBox="0 0 17 18"><circle cx="8.500" cy="9" r="8" fill="#2ab8a0"/><path d="M8.500 9V1a8 8 0 0 0-8 8z" fill="#e83838"/><path d="M8.500 9V1a8 8 0 0 1 8 8z" fill="#f0a020"/><path d="M8.500 9H.5a8 8 0 0 0 8 8z" fill="#2a80d8"/><circle cx="9.500" cy="8" r="3.500" fill="#eee"/></svg>
<div style="left:289px;top:548px;width:44px;height:28px;background:linear-gradient(#8a8a80,#3a3830);border:1px solid #777"></div>
<svg style="left:298px;top:549px;width:26px;height:25px" viewBox="0 0 26 25"><path d="M2 15c0-6 6-9 12-9s8 4 7 7-5 1-6 3 1 3-1 5-12 1-12-6z" fill="#dce4ec"/><circle cx="7" cy="12" r="1.800" fill="#e84"/><circle cx="11" cy="9" r="1.800" fill="#4a4"/><circle cx="16" cy="10" r="1.800" fill="#48c"/><circle cx="6" cy="17" r="1.800" fill="#c4c"/><path d="M25 1L15 15" stroke="#c89048" stroke-width="2"/></svg>
<span style="left:923px;top:555px;font-size:9px;color:#ccc">EN</span>
<div style="left:945px;top:561px;border:3px solid transparent;border-bottom:4px solid #eee;border-top:0"></div>
<span style="left:967px;top:549px;font-size:9.500px;color:#ddd">8:12 PM</span>
<span style="left:966px;top:563px;font-size:9.500px;color:#ddd">8/7/2021</span>
<div style="left:1013px;top:547px;width:11px;height:29px;background:linear-gradient(#777,#222);border:1px solid #555"></div>
</div></body></html>
